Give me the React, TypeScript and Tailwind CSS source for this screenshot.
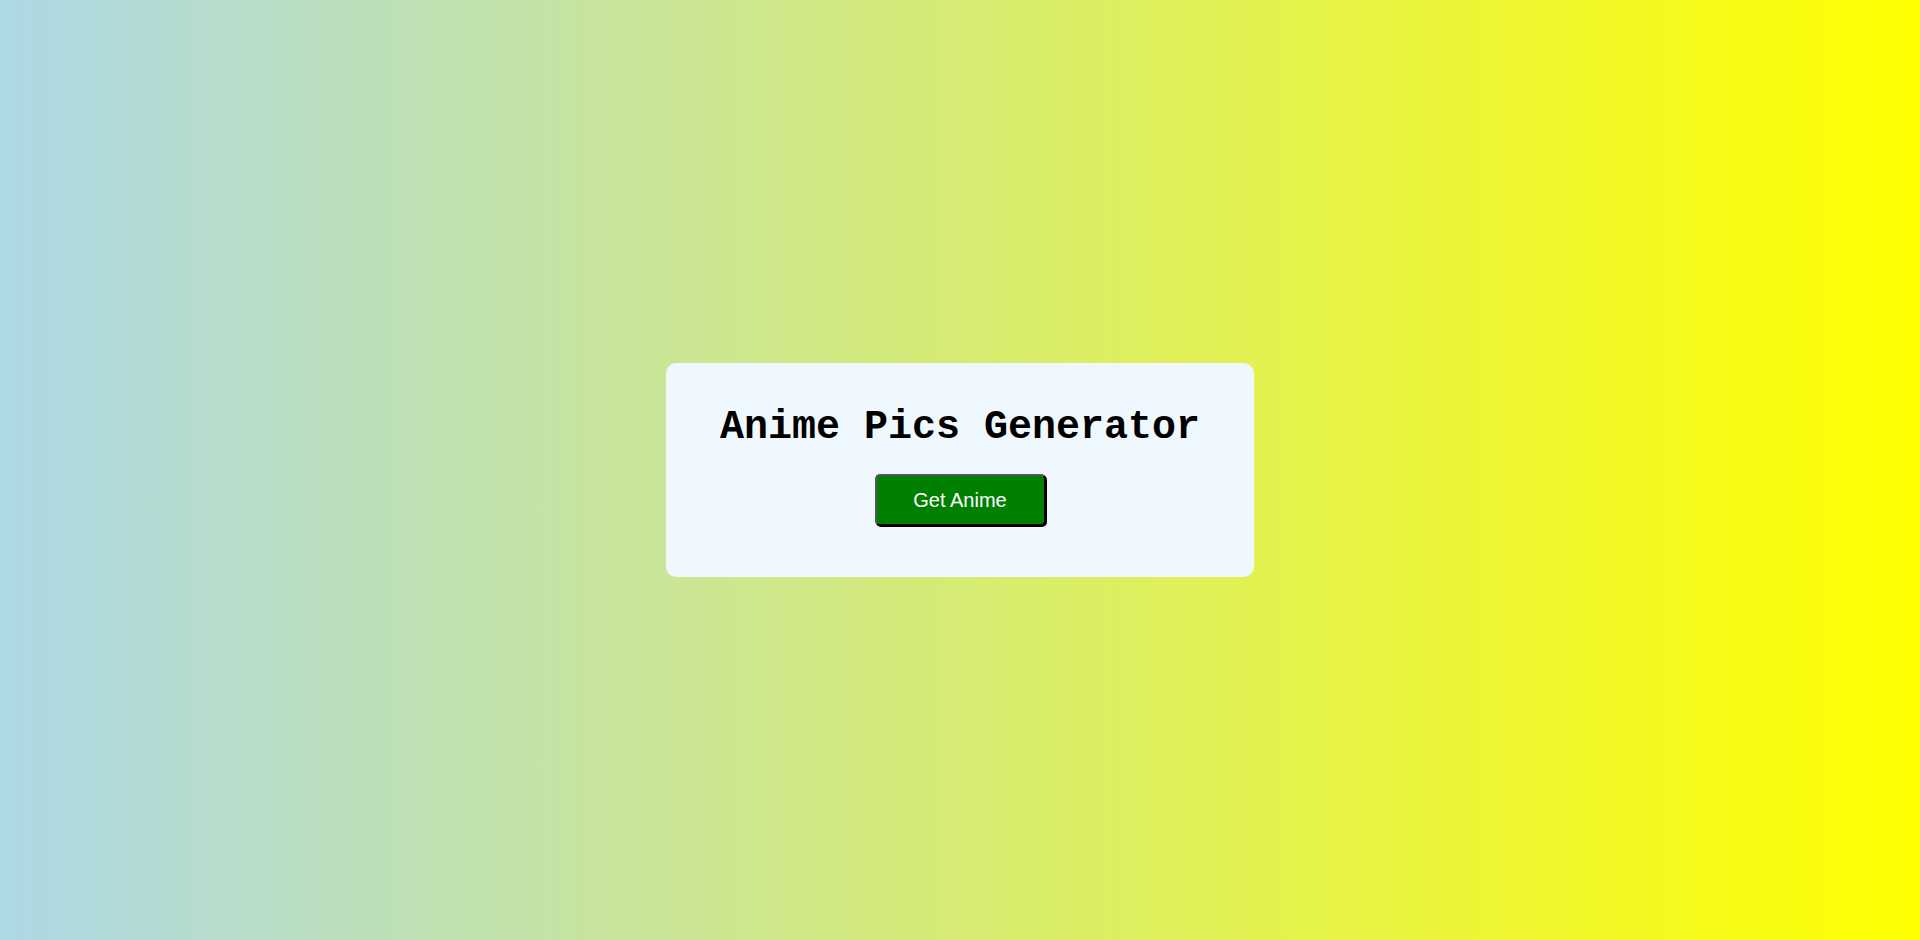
import React from 'react';

// Simple landing card for the anime picture generator
const App: React.FC = () => {
    return (
        <div className="w-full h-[940px] flex items-center justify-center bg-[linear-gradient(to_right,#add8e6,#ffff00)]">
            <div className="w-[588px] h-[214px] bg-[#f0f8ff] rounded-[10px] flex flex-col items-center pt-[42px]">
                <h1 className="text-[40px] leading-[45px] font-bold text-black font-['Courier_New','Liberation_Mono',monospace]">
                    Anime Pics Generator
                </h1>
                <button className="mt-[24px] w-[171px] h-[52px] bg-[#008000] text-white text-[20px] font-['Arial','Liberation_Sans',sans-serif] rounded-[5px] border-2 border-t-[#555] border-l-[#555] border-r-black border-b-black shadow-[1px_1px_0_#000]">
                    Get Anime
                </button>
            </div>
        </div>
    );
};

export default App;
